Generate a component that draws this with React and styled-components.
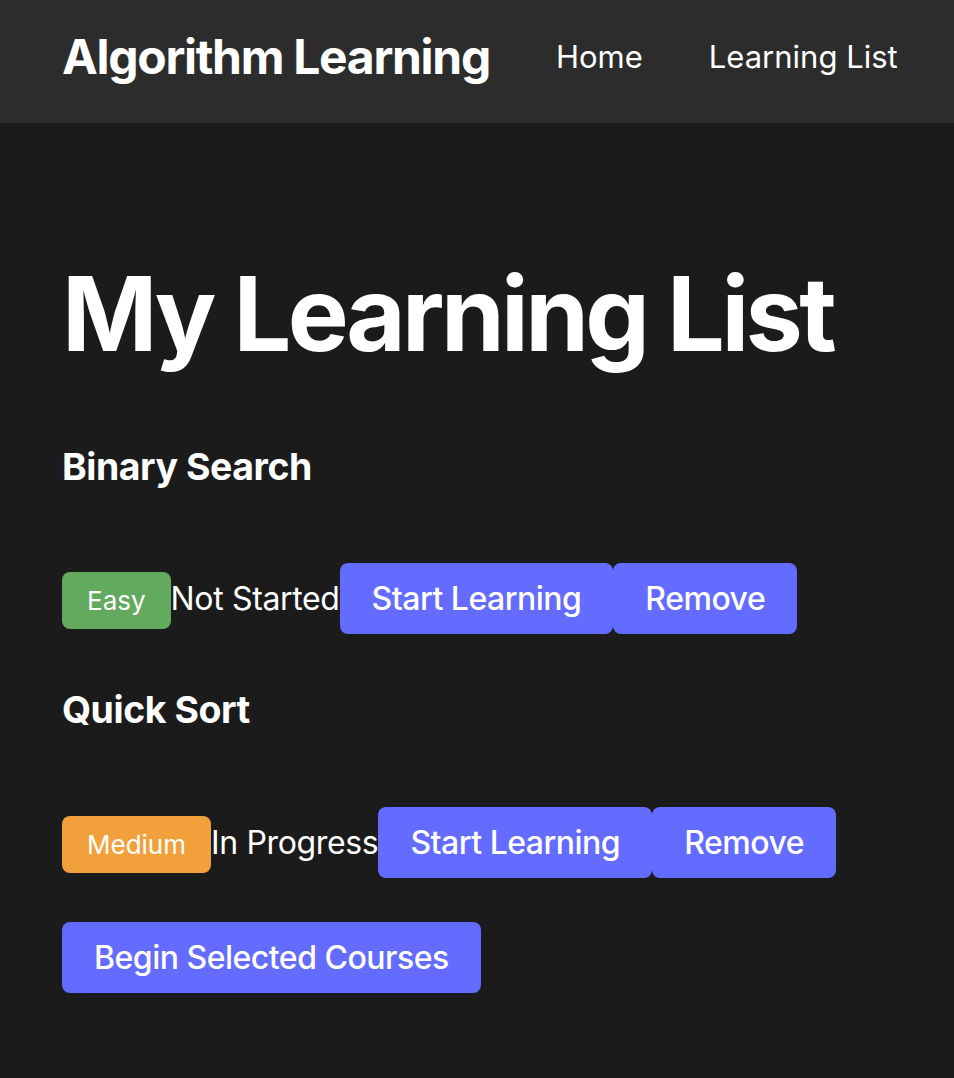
import React from "react";
import styled, { createGlobalStyle } from "styled-components";

const GlobalStyle = createGlobalStyle`
  html, body {
    margin: 0;
    padding: 0;
    background: #1b1b1b;
  }
  body {
    font-family: Inter, "Noto Sans", "Liberation Sans", sans-serif;
    color: #ffffff;
    line-height: 1.5;
    -webkit-font-smoothing: antialiased;
  }
  #root {
    min-height: 1078px;
  }
`;

const Header = styled.header`
  display: flex;
  align-items: center;
  gap: 66px;
  box-sizing: border-box;
  height: 123px;
  padding: 0 62px 10px 62px;
  background: #2c2c2c;
`;

const Brand = styled.div`
  font-size: 48px;
  font-weight: 700;
  line-height: 1.2;
  letter-spacing: -1.3px;
  white-space: nowrap;
`;

const Nav = styled.nav`
  display: flex;
  gap: 66px;
`;

const NavLink = styled.a`
  color: #ffffff;
  text-decoration: none;
  font-size: 31px;
  font-weight: 400;
  line-height: 1.2;
  white-space: nowrap;
`;

const Main = styled.main`
  padding: 0 62px 40px 62px;
`;

const Title = styled.h1`
  margin: 135px 0 68px 0;
  font-size: 102.4px;
  font-weight: 700;
  line-height: 1.1;
  letter-spacing: -3.6px;
  white-space: nowrap;
`;

const Item = styled.section`
  margin-bottom: ${(p) => (p.$last ? "0" : "48px")};
`;

const ItemTitle = styled.h3`
  margin: 0 0 68.5px 0;
  font-size: 37.44px;
  font-weight: 700;
  line-height: 1.5;
  letter-spacing: -0.45px;
`;

const Row = styled.div`
  display: flex;
  align-items: baseline;
`;

const Badge = styled.span`
  display: inline-block;
  padding: 9px 25px;
  border-radius: 8px;
  font-size: 26px;
  line-height: 1.5;
  color: #ffffff;
  background: ${(p) => (p.$level === "Medium" ? "#f2a03c" : "#63a95e")};
`;

const Status = styled.span`
  font-size: 32px;
  line-height: 1.5;
  letter-spacing: -0.35px;
  white-space: nowrap;
`;

const Button = styled.button`
  display: inline-block;
  border: none;
  border-radius: 8px;
  padding: 16px 32px;
  margin: 0;
  background: #646cff;
  color: #ffffff;
  font-family: inherit;
  font-size: 32px;
  font-weight: 500;
  line-height: normal;
  letter-spacing: -0.5px;
  cursor: pointer;
  white-space: nowrap;
`;

const Footer = styled.div`
  margin-top: 44px;
`;

const courses = [
  { name: "Binary Search", level: "Easy", status: "Not Started" },
  { name: "Quick Sort", level: "Medium", status: "In Progress" },
];

export default function App() {
  return (
    <>
      <GlobalStyle />
      <Header>
        <Brand>Algorithm Learning</Brand>
        <Nav>
          <NavLink href="#">Home</NavLink>
          <NavLink href="#">Learning List</NavLink>
        </Nav>
      </Header>
      <Main>
        <Title>My Learning List</Title>
        {courses.map((c, i) => (
          <Item key={c.name} $last={i === courses.length - 1}>
            <ItemTitle>{c.name}</ItemTitle>
            <Row>
              <Badge $level={c.level}>{c.level}</Badge>
              <Status>{c.status}</Status>
              <Button>Start Learning</Button>
              <Button>Remove</Button>
            </Row>
          </Item>
        ))}
        <Footer>
          <Button>Begin Selected Courses</Button>
        </Footer>
      </Main>
    </>
  );
}
